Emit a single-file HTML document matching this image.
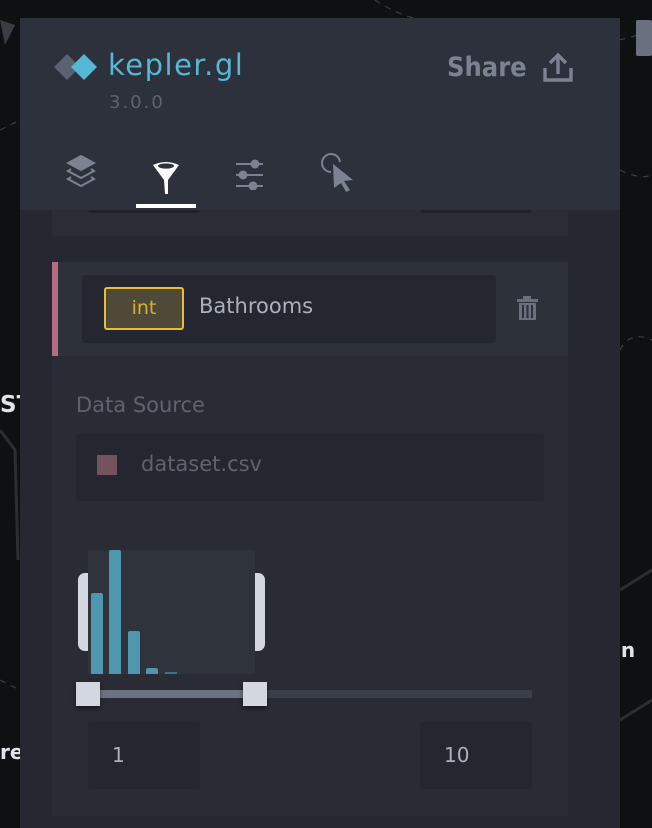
<!DOCTYPE html>
<html><head><meta charset="utf-8"><style>
*{margin:0;padding:0;box-sizing:border-box}
body{width:652px;height:828px;background:#0f1012;position:relative;overflow:hidden;font-family:"DejaVu Sans","Liberation Sans",sans-serif}
.abs{position:absolute}
</style></head><body>
<svg class="abs" style="left:0;top:0" width="652" height="828">
<g stroke="#3a3d44" stroke-width="1.2" fill="none" stroke-dasharray="6 6">
<path d="M0 130 L20 120"/><path d="M375 0 Q420 30 470 20 L560 40 Q600 50 652 30"/><path d="M620 170 Q640 180 652 175"/><path d="M620 350 Q630 330 652 340"/><path d="M0 680 L20 690"/>
</g>
<g stroke="#2b2e33" stroke-width="3" fill="none"><path d="M0 430 L15 450 L18 560"/><path d="M620 590 L652 570"/><path d="M620 720 L652 700"/></g>
<path d="M0 20 L15 25 L5 45 Z" fill="#3a3d44"/>
<rect x="636" y="20" width="16" height="36" rx="2" fill="#6a7080"/>
</svg>
<div class="abs" style="left:0;top:392px;color:#dfe3ea;font-size:23px;font-weight:bold">ST</div>
<div class="abs" style="left:0;top:740px;color:#dfe3ea;font-size:20px;font-weight:bold">re</div>
<div class="abs" style="left:614px;top:638px;color:#dfe3ea;font-size:20px;font-weight:bold">in</div>

<div class="abs" style="left:20px;top:18px;width:600px;height:810px;background:#252830"></div>
<div class="abs" style="left:20px;top:18px;width:600px;height:192px;background:#2c313b"></div>

<svg class="abs" style="left:53px;top:52px" width="44" height="32">
<path d="M14 2 L27 15 L14 28 L1 15 Z" fill="#5c6070"/>
<path d="M31 2 L44 15 L31 28 L18 15 Z" fill="#54b8d6"/>
</svg>
<div class="abs" style="left:108px;top:48px;color:#54b8d6;font-size:29px;letter-spacing:1.5px">kepler.gl</div>
<div class="abs" style="left:109px;top:92px;color:#5e6370;font-size:18px;letter-spacing:2px">3.0.0</div>
<div class="abs" style="left:447px;top:52px;color:#7c8291;font-size:27px;font-weight:bold;transform:scaleX(0.9);transform-origin:left">Share</div>
<svg class="abs" style="left:542px;top:52px" width="32" height="32" fill="none" stroke="#7c8291" stroke-width="3.4">
<path d="M3 16 V28 H29 V16"/><path d="M16 22 V4 M8 11 L16 3 L24 11"/>
</svg>

<svg class="abs" style="left:66px;top:155px" width="32" height="36" fill="none" stroke="#7c8291" stroke-width="2">
<path d="M15 1 L28 8 L15 15 L2 8 Z" fill="#7c8291"/>
<path d="M5 14 L2 16 L15 23 L28 16 L25 14"/><path d="M5 22 L2 24 L15 31 L28 24 L25 22"/>
</svg>
<svg class="abs" style="left:151px;top:160px" width="30" height="36">
<path d="M2 5 Q15 -1 28 5 L17 20 V34 H14 L13 20 Z" fill="#fff"/>
<ellipse cx="15" cy="6" rx="8" ry="2.6" fill="#2c313b"/>
</svg>
<div class="abs" style="left:136px;top:204px;width:60px;height:4px;background:#fff"></div>
<svg class="abs" style="left:235px;top:158px" width="30" height="32" stroke="#7c8291" stroke-width="2" fill="#7c8291">
<path d="M1 6 H28 M1 17 H28 M1 28 H28"/><circle cx="20" cy="6" r="3.5"/><circle cx="8" cy="17" r="3.5"/><circle cx="18" cy="28" r="3.5"/>
</svg>
<svg class="abs" style="left:320px;top:152px" width="36" height="40">
<path d="M11 20 A9 9 0 1 1 20 10" fill="none" stroke="#7c8291" stroke-width="2"/>
<path d="M13 12 L33 28 L24 29 L30 38 L26 40 L21 31 L14 36 Z" fill="#7c8291"/>
</svg>

<div class="abs" style="left:52px;top:210px;width:516px;height:26px;background:#2a2d35"></div>
<div class="abs" style="left:88px;top:210px;width:112px;height:3px;background:#20232a;border-radius:0 0 3px 3px"></div>
<div class="abs" style="left:420px;top:210px;width:112px;height:3px;background:#20232a;border-radius:0 0 3px 3px"></div>

<div class="abs" style="left:52px;top:262px;width:516px;height:554px;background:#292c34"></div>
<div class="abs" style="left:52px;top:262px;width:516px;height:94px;background:#2d313a"></div>
<div class="abs" style="left:52px;top:262px;width:6px;height:94px;background:#b86c82"></div>
<div class="abs" style="left:82px;top:275px;width:414px;height:68px;background:#242730;border-radius:3px"></div>
<div class="abs" style="left:104px;top:287px;width:80px;height:43px;background:#4f4937;border:2px solid #e8bd3b;border-radius:3px;color:#d6b13a;font-size:19px;text-align:center;line-height:39px">int</div>
<div class="abs" style="left:199px;top:294px;color:#aab0bd;font-size:21px">Bathrooms</div>
<svg class="abs" style="left:517px;top:296px" width="22" height="26" fill="#6a7080">
<rect x="6" y="0" width="8" height="3"/><rect x="0" y="3" width="21" height="3"/>
<path d="M2 7 H19 V24 H2 Z M5 9 V22 H7 V9 Z M9.5 9 V22 H11.5 V9 Z M14 9 V22 H16 V9 Z" fill-rule="evenodd"/>
</svg>

<div class="abs" style="left:76px;top:393px;color:#5e6370;font-size:21px">Data Source</div>
<div class="abs" style="left:76px;top:434px;width:468px;height:67px;background:#242730;border-radius:3px"></div>
<div class="abs" style="left:97px;top:455px;width:20px;height:20px;background:#74535f"></div>
<div class="abs" style="left:141px;top:452px;color:#5e6370;font-size:21px">dataset.csv</div>

<div class="abs" style="left:78px;top:573px;width:14px;height:78px;background:#d3d8e0;border-radius:7px 0 0 7px"></div>
<div class="abs" style="left:251px;top:573px;width:14px;height:78px;background:#d3d8e0;border-radius:0 7px 7px 0"></div>
<div class="abs" style="left:88px;top:550px;width:167px;height:124px;background:#2f333c"></div>
<div class="abs" style="left:91px;top:593px;width:12px;height:81px;background:#4f97ae;border-radius:2px 2px 0 0"></div>
<div class="abs" style="left:109px;top:550px;width:12px;height:124px;background:#4f97ae;border-radius:2px 2px 0 0"></div>
<div class="abs" style="left:128px;top:631px;width:12px;height:43px;background:#4f97ae;border-radius:2px 2px 0 0"></div>
<div class="abs" style="left:146px;top:668px;width:12px;height:6px;background:#4f97ae;border-radius:2px 2px 0 0"></div>
<div class="abs" style="left:165px;top:672px;width:12px;height:2px;background:#3e7486"></div>
<div class="abs" style="left:88px;top:690px;width:444px;height:8px;background:#3a3f4a"></div>
<div class="abs" style="left:88px;top:690px;width:167px;height:8px;background:#6b7282"></div>
<div class="abs" style="left:76px;top:682px;width:24px;height:24px;background:#d3d8e0;box-shadow:0 2px 4px rgba(0,0,0,.5)"></div>
<div class="abs" style="left:243px;top:682px;width:24px;height:24px;background:#d3d8e0;box-shadow:0 2px 4px rgba(0,0,0,.5)"></div>
<div class="abs" style="left:88px;top:722px;width:112px;height:67px;background:#242730;border-radius:3px;color:#aab0bd;font-size:20px;line-height:67px;padding-left:24px">1</div>
<div class="abs" style="left:420px;top:722px;width:112px;height:67px;background:#242730;border-radius:3px;color:#aab0bd;font-size:20px;line-height:67px;padding-left:24px">10</div>
</body></html>
